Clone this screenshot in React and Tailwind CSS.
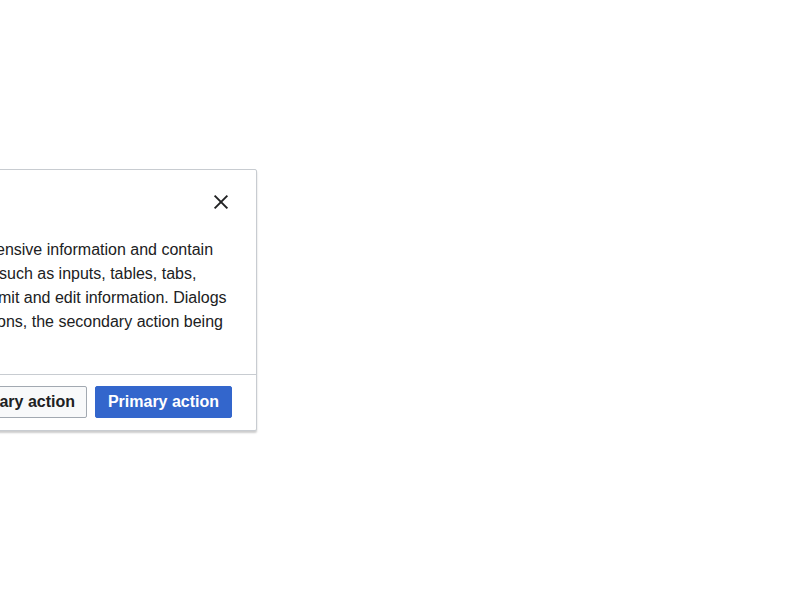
import React from "react";

function CloseIcon() {
  return (
    <svg width="20" height="20" viewBox="0 0 20 20" fill="#202122" aria-hidden="true">
      <path d="m4.34 2.93 12.73 12.73-1.41 1.41L2.93 4.35z" />
      <path d="M17.07 4.34 4.34 17.07l-1.41-1.41L15.66 2.93z" />
    </svg>
  );
}

export default function App() {
  return (
    <div
      className="w-[800px] h-[600px] bg-white overflow-hidden text-[#202122]"
      style={{ fontFamily: '"Liberation Sans", Arial, sans-serif' }}
    >
      <div className="mt-[169px] ml-[-255px] w-[512px] bg-white border border-[#c8ccd1] rounded-[2px] shadow-[0_2px_2px_0_rgba(0,0,0,0.2)] flex flex-col">
        <div className="flex items-center justify-between pt-4 pl-6 pr-[19px]">
          <h2 className="text-[18px] font-bold leading-[28px]">Dialog title</h2>
          <button className="w-8 h-8 flex items-center justify-center rounded-[2px]">
            <CloseIcon />
          </button>
        </div>
        <div className="pt-5 pb-4 px-6 text-[16px] leading-[24px]">
          <div className="whitespace-nowrap pl-[226px]">ensive information and contain</div>
          <div className="whitespace-nowrap pl-[229px]">such as inputs, tables, tabs,</div>
          <div className="whitespace-nowrap pl-[228px]">mit and edit information. Dialogs</div>
          <div className="whitespace-nowrap pl-[227px]">ons, the secondary action being</div>
          <div className="whitespace-nowrap">optional.</div>
        </div>
        <div className="border-t border-[#c8ccd1] flex justify-end gap-2 pt-[11px] pb-3 px-6">
          <button className="h-8 px-[11px] border border-[#a2a9b1] bg-[#f8f9fa] rounded-[2px] text-[16px] font-bold text-[#202122]">
            Secondary action
          </button>
          <button className="h-8 w-[137px] border border-[#36c] bg-[#36c] rounded-[2px] text-[16px] font-bold text-white">
            Primary action
          </button>
        </div>
      </div>
    </div>
  );
}
